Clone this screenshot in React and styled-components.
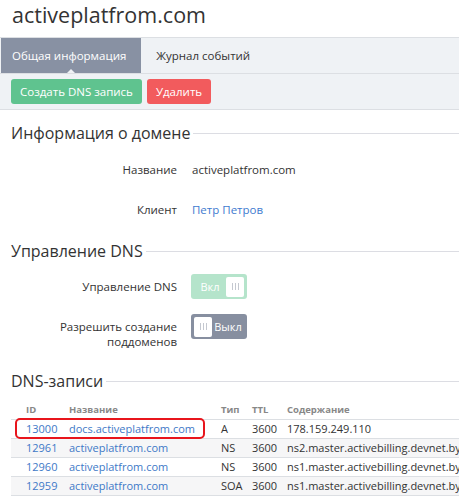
import React from "react";
import styled, { createGlobalStyle } from "styled-components";

const GlobalStyle = createGlobalStyle`
	body {
		margin: 0;
		background: #fff;
		font-family: "Open Sans", "Liberation Sans", sans-serif;
		color: #333;
		overflow: hidden;
	}
`;

const records = [
	{ id: 13000, name: "docs.activeplatfrom.com", type: "A", ttl: 3600, value: "178.159.249.110" },
	{ id: 12961, name: "activeplatfrom.com", type: "NS", ttl: 3600, value: "ns2.master.activebilling.devnet.by." },
	{ id: 12960, name: "activeplatfrom.com", type: "NS", ttl: 3600, value: "ns1.master.activebilling.devnet.by." },
	{ id: 12959, name: "activeplatfrom.com", type: "SOA", ttl: 3600, value: "ns1.master.activebilling.devnet.by" },
];

const Switch = ({ on }) => (
	<Toggle $on={on}>
		{on ? <ToggleText>Вкл</ToggleText> : null}
		<Knob>
			<i />
			<i />
			<i />
		</Knob>
		{!on ? <ToggleText>Выкл</ToggleText> : null}
	</Toggle>
);

const App = () => {
	return (
		<Wrapper>
			<GlobalStyle />
			<Title>activeplatfrom.com</Title>
			<Tabs>
				<Tab $active>Общая информация</Tab>
				<Tab>Журнал событий</Tab>
			</Tabs>
			<Toolbar>
				<Button $color="#5fc38f">Создать DNS запись</Button>
				<Button $color="#f25b5d">Удалить</Button>
			</Toolbar>

			<Section>
				<Heading>Информация о домене</Heading>
				<Field>
					<Label>Название</Label>
					<Value>activeplatfrom.com</Value>
				</Field>
				<Field>
					<Label>Клиент</Label>
					<Value as="a">Петр Петров</Value>
				</Field>
			</Section>

			<Section $gap="9px">
				<Heading>Управление DNS</Heading>
				<SwitchList>
					<SwitchRow>
						<SwitchLabel>Управление DNS</SwitchLabel>
						<Switch on />
					</SwitchRow>
					<SwitchRow>
						<SwitchLabel>
							Разрешить создание
							<br />
							поддоменов
						</SwitchLabel>
						<Switch />
					</SwitchRow>
				</SwitchList>
			</Section>

			<Section $gap="20px">
				<Heading>DNS-записи</Heading>
				<TableBox>
					<Table>
						<colgroup>
							<col style={{ width: 51 }} />
							<col style={{ width: 152 }} />
							<col style={{ width: 31 }} />
							<col style={{ width: 35 }} />
							<col />
						</colgroup>
						<thead>
							<tr>
								<th>ID</th>
								<th>Название</th>
								<th>Тип</th>
								<th>TTL</th>
								<th>Содержание</th>
							</tr>
						</thead>
						<tbody>
							{records.map((r) => (
								<tr key={r.id}>
									<td>
										<Link>{r.id}</Link>
									</td>
									<td>
										<Link>{r.name}</Link>
									</td>
									<td>{r.type}</td>
									<td>{r.ttl}</td>
									<td>{r.value}</td>
								</tr>
							))}
						</tbody>
					</Table>
					<Highlight />
				</TableBox>
			</Section>
		</Wrapper>
	);
};

export default App;

const Wrapper = styled.div`
	width: 459px;
	height: 498px;
	overflow: hidden;
`;

const Title = styled.h1`
	margin: 0;
	padding: 0 12px;
	height: 37px;
	line-height: 30px;
	font-size: 21.5px;
	font-weight: 400;
	color: #333;
`;

const Tabs = styled.div`
	display: flex;
	height: 35px;
	background: #eff2f5;
	border-top: 1px solid #dcdfe3;
	border-bottom: 1px solid #dcdfe3;
`;

const Tab = styled.div`
	position: relative;
	margin-left: ${(p) => (p.$active ? "1px" : "0")};
	padding: ${(p) => (p.$active ? "0 15px 0 11px" : "0 15px")};
	line-height: 35px;
	font-size: 11.5px;
	color: ${(p) => (p.$active ? "#fff" : "#333")};
	background: ${(p) => (p.$active ? "#8891a3" : "transparent")};

	&::after {
		content: "";
		display: ${(p) => (p.$active ? "block" : "none")};
		position: absolute;
		left: 50%;
		bottom: 0;
		margin-left: -4px;
		border: 4px solid transparent;
		border-bottom-color: #eff2f5;
		border-top: 0;
	}
`;

const Toolbar = styled.div`
	display: flex;
	gap: 5px;
	padding: 5px 11px;
	background: #eff2f5;
	border-bottom: 1px solid #dcdfe3;
`;

const Button = styled.button`
	height: 25px;
	padding: 0 9px;
	border: 0;
	border-radius: 3px;
	background: ${(p) => p.$color};
	color: #fff;
	font-family: "Open Sans", "Liberation Sans", sans-serif;
	font-size: 11.5px;
	line-height: 25px;
`;

const Section = styled.section`
	padding: 0 0 0 11px;
	margin-top: ${(p) => p.$gap || "11px"};
`;

const Heading = styled.h2`
	display: flex;
	align-items: center;
	margin: 0;
	font-size: 16px;
	line-height: 24px;
	font-weight: 400;
	color: #333;

	&::after {
		content: "";
		flex: 1;
		height: 1px;
		margin-left: 3px;
		background: #dcdde3;
	}
`;

const Field = styled.div`
	display: grid;
	grid-template-columns: 166px 1fr;
	column-gap: 15px;
	padding: 5px 0;
	line-height: 30px;
	font-size: 11.5px;

	&:first-of-type {
		margin-top: 5px;
	}
`;

const Label = styled.div`
	text-align: right;
	color: #333;
`;

const Value = styled.div`
	color: ${(p) => (p.as === "a" ? "#3e7bcf" : "#333")};
`;

const SwitchList = styled.div`
	display: flex;
	flex-direction: column;
	gap: 15px;
	padding-top: 11px;
`;

const SwitchRow = styled.div`
	display: grid;
	grid-template-columns: 166px auto;
	column-gap: 14px;
	align-items: start;
	justify-content: start;
`;

const SwitchLabel = styled.div`
	padding-top: 5px;
	text-align: right;
	font-size: 11.5px;
	line-height: 15px;
	color: #333;
`;

const Toggle = styled.div`
	display: flex;
	align-items: center;
	justify-content: space-between;
	box-sizing: border-box;
	width: 56px;
	height: 25px;
	padding: 0 3px;
	border-radius: 3px;
	background: ${(p) => (p.$on ? "#b5e4cb" : "#878fa0")};
`;

const ToggleText = styled.span`
	flex: 1;
	text-align: center;
	font-size: 11px;
	color: #fff;
`;

const Knob = styled.span`
	display: flex;
	align-items: center;
	justify-content: center;
	gap: 2px;
	width: 18px;
	height: 20px;
	border-radius: 2px;
	background: #fff;

	i {
		display: block;
		width: 1px;
		height: 7px;
		background: #c4c8d0;
	}
`;

const TableBox = styled.div`
	position: relative;
	margin-top: 6px;
`;

const Table = styled.table`
	width: 520px;
	table-layout: fixed;
	border-collapse: collapse;
	font-size: 11px;
	white-space: nowrap;

	th {
		height: 20px;
		padding: 0 0 0 7px;
		text-align: left;
		font-size: 9.5px;
		font-weight: 700;
		color: #888;
	}

	td {
		height: 18px;
		padding: 0 0 0 7px;
		line-height: 18px;
		color: #333;
		border-top: 1px solid #dcdfe3;
	}

	th:first-child,
	td:first-child {
		padding-left: 15px;
	}

	tbody tr:nth-child(even) td {
		background: #f6f6f7;
	}

	tbody tr:last-child td {
		border-bottom: 1px solid #dcdfe3;
	}
`;

const Link = styled.a`
	color: #3e79c7;
	text-decoration: none;
`;

const Highlight = styled.div`
	position: absolute;
	left: 4px;
	top: 19px;
	width: 190px;
	height: 21px;
	box-sizing: border-box;
	border: 2px solid #e8151c;
	border-radius: 5px;
	pointer-events: none;
`;
